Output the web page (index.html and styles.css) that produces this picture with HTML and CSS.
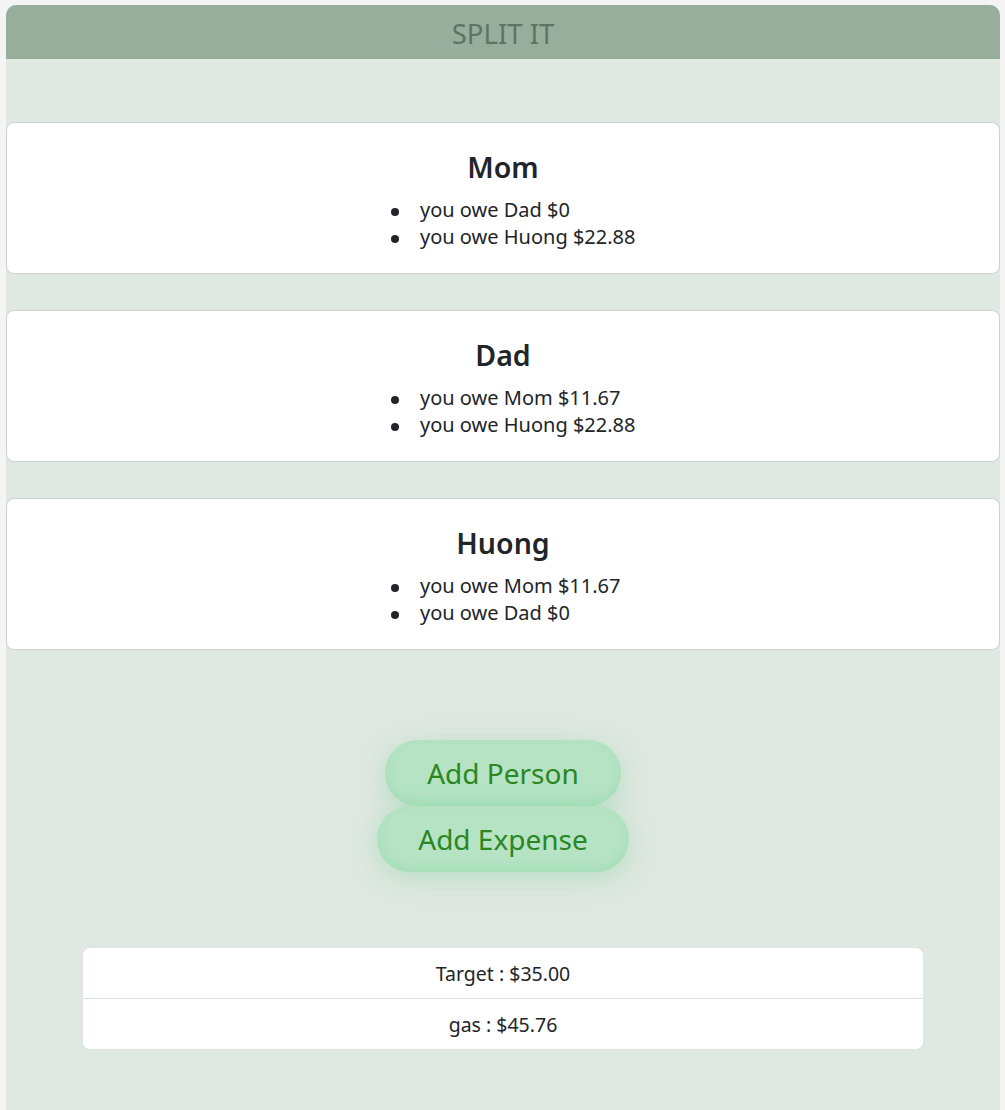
FILE: index.html
```html
<!DOCTYPE html>
<html lang="en">
<head>
    <meta charset="UTF-8">
    <meta name="viewport" content="width=device-width, initial-scale=1.0">
    <title>Split It</title>
    <link rel="stylesheet" href="styles.css">
</head>
<body>
    <div class="app">
        <header class="app-header">SPLIT IT</header>

        <div class="people">
            <div class="person-card">
                <h3>Mom</h3>
                <ul>
                    <li>you owe Dad $0</li>
                    <li>you owe Huong $22.88</li>
                </ul>
            </div>
            <div class="person-card">
                <h3>Dad</h3>
                <ul>
                    <li>you owe Mom $11.67</li>
                    <li>you owe Huong $22.88</li>
                </ul>
            </div>
            <div class="person-card">
                <h3>Huong</h3>
                <ul>
                    <li>you owe Mom $11.67</li>
                    <li>you owe Dad $0</li>
                </ul>
            </div>
        </div>

        <div class="actions">
            <button class="pill pill-person">Add Person</button>
            <button class="pill pill-expense">Add Expense</button>
        </div>

        <ul class="expenses">
            <li>Target : $35.00</li>
            <li>gas : $45.76</li>
        </ul>
    </div>
</body>
</html>
```

FILE: styles.css
```css
body {
    margin: 5px 5px 0 6px;
    background-color: #f4f4f4;
    font-family: "Noto Sans", "Open Sans", sans-serif;
    color: #212529;
}
.app {
    background-color: #dfe8e1;
    border-radius: 10px 10px 0 0;
    min-height: 1105px;
    overflow: hidden;
}
.app-header {
    height: 54px;
    line-height: 57px;
    background-color: #97ae9d;
    color: #5f7264;
    text-align: center;
    font-size: 27.5px;
}
.people {
    display: flex;
    flex-direction: column;
    gap: 36px;
    padding-top: 63px;
}
.person-card {
    background-color: white;
    border: 1px solid #cfd3d0;
    border-radius: 8px;
    height: 152px;
    box-sizing: border-box;
    padding: 27px 16px 0;
    text-align: center;
}
.person-card h3 {
    margin: 0 0 12px;
    font-size: 28.5px;
    font-weight: 600;
    line-height: 34px;
}
.person-card ul {
    margin: 0 auto;
    width: 198px;
    padding-left: 32px;
    list-style: none;
    text-align: left;
    white-space: nowrap;
    font-size: 20px;
    line-height: 27px;
}
.person-card li::before {
    content: "";
    display: inline-block;
    width: 8px;
    height: 8px;
    border-radius: 50%;
    background-color: #212529;
    margin: 0 21px 0 -29px;
    vertical-align: middle;
}
.actions {
    display: flex;
    flex-direction: column;
    align-items: center;
    padding-top: 90px;
}
.pill {
    font-family: inherit;
    font-size: 28px;
    color: #2a8722;
    background-color: #b5e3c4;
    border: none;
    border-radius: 34px;
    height: 66px;
    cursor: pointer;
    box-shadow: 0 6px 28px rgba(110, 200, 140, 0.35), inset 0 -4px 8px rgba(120, 210, 150, 0.25);
}
.pill-person {
    padding: 0 42px;
}
.pill-expense {
    padding: 0 41px;
}
.expenses {
    list-style: none;
    margin: 75px 76px 0 76px;
    padding: 0;
    background-color: white;
    border: 1px solid #dee2e6;
    border-radius: 8px;
    font-size: 19.5px;
    text-align: center;
}
.expenses li {
    height: 50px;
    line-height: 51px;
}
.expenses li + li {
    border-top: 1px solid #dee2e6;
}
```
